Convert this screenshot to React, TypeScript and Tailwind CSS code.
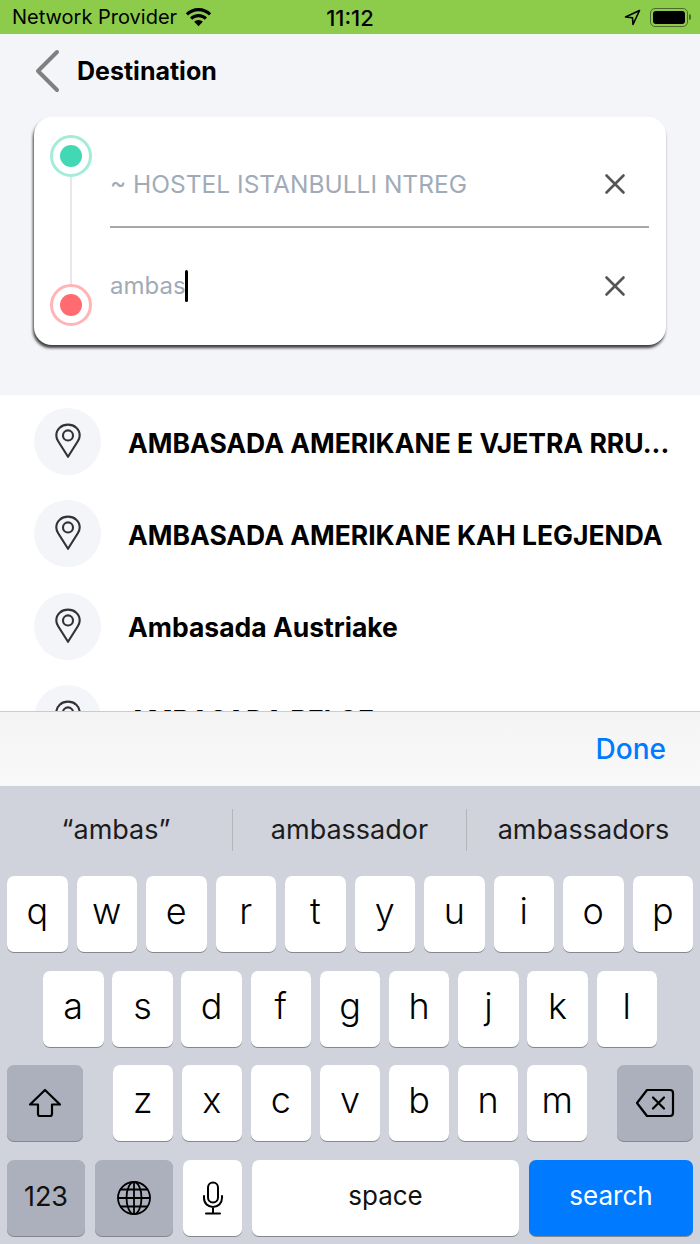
import React from 'react';

const results = [
  'AMBASADA AMERIKANE E VJETRA RRU...',
  'AMBASADA AMERIKANE KAH LEGJENDA',
  'Ambasada Austriake',
  'AMBASADA BELGE',
];

const Pin = () => (
  <svg width="26" height="36" viewBox="0 0 28 38" fill="none" stroke="#333" strokeWidth="2.3">
    <path d="M14 36 L3.6 19.5 C2 17 1.4 15 1.4 13 C1.4 6.2 7 1.4 14 1.4 C21 1.4 26.6 6.2 26.6 13 C26.6 15 26 17 24.4 19.5 Z" strokeLinejoin="round" />
    <circle cx="14" cy="13" r="5.4" />
  </svg>
);

const Cross = () => (
  <svg width="22" height="22" viewBox="0 0 22 22" stroke="#555" strokeWidth="2.6" strokeLinecap="round">
    <path d="M2.5 2.5 L19.5 19.5 M19.5 2.5 L2.5 19.5" />
  </svg>
);

const Dot = ({ ring, fill }: { ring: string; fill: string }) => (
  <div className={`w-[42px] h-[42px] rounded-full border-[3px] flex items-center justify-center shrink-0 ${ring}`}>
    <div className={`w-[22px] h-[22px] rounded-full ${fill}`} />
  </div>
);

const Key = ({ label }: { label: string }) => (
  <div className="w-[60.5px] h-[76px] rounded-[7px] bg-white shadow-[0_1px_0_#85878c] flex items-center justify-center text-[36px] font-light text-black pb-[6px]">
    {label}
  </div>
);

export default function App() {
  return (
    <div className="w-[700px] h-[1244px] overflow-hidden flex flex-col bg-[#f4f5f9] font-[Inter,sans-serif] text-black">
      {/* Status bar */}
      <div className="h-[34px] bg-[#8dcc4b] flex items-center pl-3 pr-[9px] relative shrink-0">
        <span className="text-[20px] leading-none">Network Provider</span>
        <svg className="ml-2" width="27" height="20" viewBox="0 0 27 20">
          <path d="M13.5 1 C8.5 1 4 3 .8 6.2 L3 8.5 C5.7 5.8 9.4 4.2 13.5 4.2 S21.3 5.8 24 8.5 L26.2 6.2 C23 3 18.5 1 13.5 1 Z" />
          <path d="M13.5 7 C10.2 7 7.2 8.3 5 10.5 L7.2 12.8 C8.8 11.2 11 10.2 13.5 10.2 S18.2 11.2 19.8 12.8 L22 10.5 C19.8 8.3 16.8 7 13.5 7 Z" />
          <path d="M13.5 13 C11.8 13 10.3 13.7 9.2 14.8 L13.5 19.2 L17.8 14.8 C16.7 13.7 15.2 13 13.5 13 Z" />
        </svg>
        <span className="absolute left-0 right-0 text-center text-[22px] font-medium leading-none pt-[2px]">11:12</span>
        <div className="ml-auto flex items-center gap-[9px]">
          <svg width="17" height="17" viewBox="0 0 17 17" fill="none" stroke="#000" strokeWidth="1.6" strokeLinejoin="round">
            <path d="M15.5 1.5 L1.5 8 L8.5 8.7 L9 15.5 Z" />
          </svg>
          <div className="flex items-center gap-[1px]">
            <div className="w-[38px] h-[19px] rounded-[5px] border border-[#4c6b2a] p-[2px]">
              <div className="w-full h-full rounded-[3px] bg-black" />
            </div>
            <div className="w-[2px] h-[6px] rounded-r bg-[#4c6b2a]" />
          </div>
        </div>
      </div>

      {/* Header */}
      <div className="h-[74px] flex items-center pl-[35px] shrink-0">
        <svg width="25" height="44" viewBox="0 0 25 44" fill="none" stroke="#808080" strokeWidth="4" strokeLinecap="round" strokeLinejoin="round">
          <path d="M22 3 L3 22 L22 41" />
        </svg>
        <span className="ml-[17px] text-[25px] font-bold leading-none">Destination</span>
      </div>

      {/* Route card */}
      <div className="shrink-0 h-[287px] pt-[9px] px-[34px]">
        <div className="h-[228px] rounded-[18px] bg-white shadow-[-1px_3px_3px_rgba(0,0,0,0.75)] flex pl-4 pr-[17px]">
          <div className="flex flex-col items-center pt-[18px] pb-[19px]">
            <Dot ring="border-[#a3ecd8]" fill="bg-[#43d8b4]" />
            <div className="w-[2px] flex-1 bg-[#e8e8ea]" />
            <Dot ring="border-[#ffb4b6]" fill="bg-[#ff6b70]" />
          </div>
          <div className="ml-[18px] flex-1 flex flex-col">
            <div className="h-[111px] pt-[50px] border-b-2 border-b-[#a8a8a8]">
              <div className="h-[34px] flex items-center justify-between pr-[23px]">
                <span className="text-[24.5px] text-[#a1abb8]">~ HOSTEL ISTANBULLI NTREG</span>
                <Cross />
              </div>
            </div>
            <div className="pt-[41px]">
              <div className="h-[34px] flex items-center justify-between pr-[23px]">
                <div className="flex items-center">
                  <span className="text-[24px] text-[#a1abb8]">ambas</span>
                  <span className="w-[3px] h-[32px] rounded-full bg-black -ml-[1px]" />
                </div>
                <Cross />
              </div>
            </div>
          </div>
        </div>
      </div>

      {/* Search results */}
      <div className="h-[316px] shrink-0 overflow-hidden bg-white pt-[13px] pl-[34px] flex flex-col gap-[25.4px]">
        {results.map(name => (
          <div key={name} className="flex items-center shrink-0">
            <div className="w-[67px] h-[67px] rounded-full bg-[#f4f5f9] flex items-center justify-center shrink-0 pb-[1px]">
              <Pin />
            </div>
            <span className="ml-[27px] pt-[4px] text-[26.5px] font-bold whitespace-nowrap">{name}</span>
          </div>
        ))}
      </div>

      {/* Keyboard toolbar */}
      <div className="h-[75px] shrink-0 border-t border-t-[#cbcbcd] bg-linear-to-b from-[#f4f4f4] to-[#f9f9f9] flex items-center justify-end pr-[34px]">
        <span className="text-[28px] font-medium text-[#007aff]">Done</span>
      </div>

      {/* Keyboard */}
      <div className="flex-1 bg-[#d0d3db] flex flex-col">
        <div className="h-[90px] flex items-center pb-[1px] text-[27px] text-[#1c1c1e]">
          <div className="w-[232px] text-center">“ambas”</div>
          <div className="w-[1px] h-[42px] mb-[2px] bg-[#b4b6bc]" />
          <div className="w-[233px] text-center">ambassador</div>
          <div className="w-[1px] h-[42px] mb-[2px] bg-[#b4b6bc]" />
          <div className="flex-1 text-center">ambassadors</div>
        </div>
        <div className="flex flex-col gap-[18.5px]">
          <div className="flex justify-between px-[7px]">
            {'qwertyuiop'.split('').map(k => <Key key={k} label={k} />)}
          </div>
          <div className="flex justify-between px-[43px]">
            {'asdfghjkl'.split('').map(k => <Key key={k} label={k} />)}
          </div>
          <div className="flex justify-between px-[7px]">
            <div className="w-[76px] h-[76px] rounded-[7px] bg-[#abb0bc] shadow-[0_1px_0_#85878c] flex items-center justify-center">
              <svg width="34" height="30" viewBox="0 0 34 30" fill="none" stroke="#000" strokeWidth="2.2" strokeLinejoin="round">
                <path d="M17 2 L32 16.5 L24 16.5 L24 26 Q24 28 22 28 L12 28 Q10 28 10 26 L10 16.5 L2 16.5 Z" />
              </svg>
            </div>
            <div className="flex w-[475px] justify-between">
              {'zxcvbnm'.split('').map(k => <Key key={k} label={k} />)}
            </div>
            <div className="w-[76px] h-[76px] rounded-[7px] bg-[#abb0bc] shadow-[0_1px_0_#85878c] flex items-center justify-center">
              <svg width="40" height="30" viewBox="0 0 40 30" fill="none" stroke="#000" strokeWidth="2.2" strokeLinejoin="round" strokeLinecap="round">
                <path d="M12 2 L35 2 Q38 2 38 5 L38 25 Q38 28 35 28 L12 28 L2 15 Z" />
                <path d="M18 9.5 L29 20.5 M29 9.5 L18 20.5" />
              </svg>
            </div>
          </div>
          <div className="flex px-[7px] gap-[10px]">
            <div className="w-[78px] h-[76px] rounded-[7px] bg-[#abb0bc] shadow-[0_1px_0_#85878c] flex items-center justify-center text-[27px] text-[#111]">
              123
            </div>
            <div className="w-[78px] h-[76px] rounded-[7px] bg-[#abb0bc] shadow-[0_1px_0_#85878c] flex items-center justify-center">
              <svg width="36" height="36" viewBox="0 0 36 36" fill="none" stroke="#000" strokeWidth="1.8">
                <circle cx="18" cy="18" r="16" />
                <ellipse cx="18" cy="18" rx="7.5" ry="16" />
                <path d="M18 2 V34 M2 18 H34 M4.5 9.5 H31.5 M4.5 26.5 H31.5" />
              </svg>
            </div>
            <div className="w-[59px] h-[76px] rounded-[7px] bg-white shadow-[0_1px_0_#85878c] flex items-center justify-center">
              <svg width="22" height="34" viewBox="0 0 22 34" fill="none" stroke="#000" strokeWidth="2" strokeLinecap="round">
                <rect x="6" y="1.5" width="10" height="20" rx="5" />
                <path d="M2 15 V17 C2 22.5 6 26 11 26 S20 22.5 20 17 V15 M11 26 V32 M4 32.5 H18" />
              </svg>
            </div>
            <div className="w-[267px] h-[76px] rounded-[7px] bg-white shadow-[0_1px_0_#85878c] flex items-center justify-center text-[26px] pb-[5px] text-[#111]">
              space
            </div>
            <div className="w-[164px] h-[76px] rounded-[7px] bg-[#007aff] shadow-[0_1px_0_#85878c] flex items-center justify-center text-[26px] pb-[5px] text-white">
              search
            </div>
          </div>
        </div>
      </div>
    </div>
  );
}
